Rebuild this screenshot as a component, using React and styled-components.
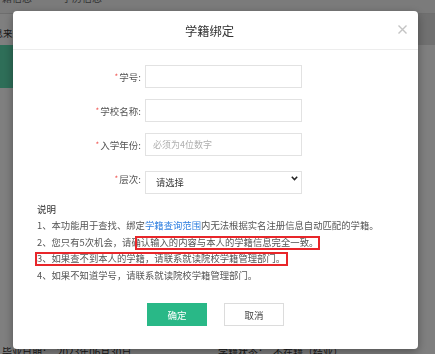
import React from "react";
import styled, { createGlobalStyle } from "styled-components";

const Global = createGlobalStyle`
  html, body { margin: 0; padding: 0; }
  body {
    width: 435px;
    height: 354px;
    overflow: hidden;
    background: #ffffff;
    font-family: "Noto Sans CJK SC", "Noto Sans", sans-serif;
  }
  * { box-sizing: border-box; }
`;

/* ---------- page behind the dialog ---------- */
const Page = styled.div`
  height: 359px;
  display: flex;
  flex-direction: column;
  background: #fff;
`;

const TopNav = styled.div`
  height: 14px;
  background: #f6f6f6;
  border-bottom: 1px solid #dcdcdc;
  display: flex;
  gap: 30px;
  padding-left: 0;
  overflow: hidden;
`;

const NavItem = styled.span`
  font-size: 10px;
  line-height: 10px;
  color: #666;
  margin-top: -7px;
  margin-left: ${(p) => p.$offset || 0}px;
`;

const SubBar = styled.div`
  height: 31px;
  background: #e0e0e0;
  display: flex;
  align-items: stretch;
  overflow: hidden;
`;

const SubTab = styled.div`
  background: #fff;
  width: 120px;
  display: flex;
  align-items: center;
  padding-top: 7px;
  font-size: 9.5px;
  color: #333;
  span { margin-left: -16px; }
`;

const Banner = styled.div`
  height: 43px;
  width: 220px;
  background: #5cdcb0;
`;

const InfoRow = styled.div`
  margin-top: auto;
  height: 14px;
  display: flex;
  font-size: 10px;
  line-height: 14px;
  color: #333;
  white-space: nowrap;
`;

const InfoItem = styled.span`
  width: ${(p) => p.$w}px;
  padding-left: ${(p) => p.$pl || 0}px;
`;

/* ---------- dialog ---------- */
const Overlay = styled.div`
  position: fixed;
  inset: 0;
  background: rgba(0, 0, 0, 0.5);
  display: flex;
  align-items: flex-start;
  padding: 11px 0 0 13px;
`;

const Modal = styled.div`
  width: 405px;
  height: 338px;
  background: #fff;
  border-radius: 4px;
  box-shadow: 0 3px 10px rgba(0, 0, 0, 0.35);
  display: flex;
  flex-direction: column;
`;

const Header = styled.div`
  height: 39px;
  border-bottom: 1px solid #ededed;
  display: flex;
  align-items: center;
  padding: 0 10px;
`;

const Title = styled.div`
  flex: 1;
  text-align: center;
  font-size: 12.3px;
  color: #333;
  padding-top: 1px;
`;

const CloseBtn = styled.button`
  width: 12px;
  height: 12px;
  padding: 0;
  border: 0;
  background: none;
  display: flex;
  align-items: center;
  justify-content: center;
  margin-top: -2px;
  cursor: pointer;
`;

const Body = styled.div`
  flex: 1;
  display: flex;
  flex-direction: column;
  padding: 15px 24px 0;
`;

const Form = styled.div`
  display: flex;
  flex-direction: column;
  gap: 11px;
`;

const Row = styled.div`
  display: flex;
  align-items: center;
  height: 23px;
`;

const Label = styled.label`
  width: 104px;
  margin-right: 4px;
  text-align: right;
  font-size: 9.5px;
  color: #555;
  white-space: nowrap;
`;

const Req = styled.span`
  color: #f0524f;
  font-size: 8px;
  margin-right: 1px;
  position: relative;
  top: -1px;
`;

const Input = styled.input`
  width: 157px;
  height: 23px;
  border: 1px solid #e2e2e2;
  border-radius: 0;
  padding: 0 7px;
  font-size: 9px;
  font-family: inherit;
  color: #333;
  outline: none;
  &::placeholder { color: #b0b0b0; }
`;

const SelectWrap = styled.div`
  position: relative;
  width: 157px;
  height: 23px;
`;

const Select = styled.select`
  appearance: none;
  width: 100%;
  height: 100%;
  border: 1px solid #e2e2e2;
  border-radius: 0;
  background: #fff;
  padding: 0 10px;
  font-size: 9.3px;
  font-family: inherit;
  color: #333;
  outline: none;
`;

const Chevron = styled.svg`
  position: absolute;
  right: 4px;
  top: 9px;
  pointer-events: none;
`;

const Notes = styled.div`
  position: relative;
  margin-top: 10.5px;
  font-size: 9.35px;
  line-height: 16.5px;
  color: #555;
  white-space: nowrap;
`;

const NotesTitle = styled.div`
  color: #333;
  font-size: 9.5px;
`;

const Link = styled.a`
  color: #2f7fe0;
  text-decoration: none;
`;

const Marker = styled.div`
  position: absolute;
  border: 2px solid #e8262a;
  pointer-events: none;
`;

const Actions = styled.div`
  margin-top: 20px;
  display: flex;
  justify-content: center;
  gap: 17px;
`;

const Button = styled.button`
  width: 60px;
  height: 23px;
  font-family: inherit;
  font-size: 9.5px;
  border-radius: 0;
  cursor: pointer;
  padding: 0;
  border: 1px solid ${(p) => (p.$primary ? "#29b887" : "#dcdcdc")};
  background: ${(p) => (p.$primary ? "#29b887" : "#fff")};
  color: ${(p) => (p.$primary ? "#fff" : "#444")};
`;

export default function App() {
  return (
    <>
      <Global />
      <Page>
        <TopNav>
          <NavItem $offset={-8}>学籍信息</NavItem>
          <NavItem>学历信息</NavItem>
        </TopNav>
        <SubBar>
          <SubTab>
            <span>信息来源</span>
          </SubTab>
        </SubBar>
        <Banner />
        <InfoRow>
          <InfoItem $w={218} $pl={2}>毕业日期：　2023年06月30日</InfoItem>
          <InfoItem $w={200}>学籍状态：　不在籍（结业）</InfoItem>
        </InfoRow>
      </Page>

      <Overlay>
        <Modal>
          <Header>
            <Title>学籍绑定</Title>
            <CloseBtn aria-label="关闭">
              <svg width="9" height="9" viewBox="0 0 9 9">
                <path d="M0.5 0.5 L8.5 8.5 M8.5 0.5 L0.5 8.5" stroke="#c4c4c4" strokeWidth="1.4" />
              </svg>
            </CloseBtn>
          </Header>
          <Body>
            <Form>
              <Row>
                <Label><Req>*</Req>学号:</Label>
                <Input />
              </Row>
              <Row>
                <Label><Req>*</Req>学校名称:</Label>
                <Input />
              </Row>
              <Row>
                <Label><Req>*</Req>入学年份:</Label>
                <Input placeholder="必须为4位数字" />
              </Row>
              <Row>
                <Label><Req>*</Req>层次:</Label>
                <SelectWrap>
                  <Select defaultValue="">
                    <option value="">请选择</option>
                  </Select>
                  <Chevron width="7" height="5" viewBox="0 0 7 5">
                    <path d="M0.8 0.8 L3.5 3.6 L6.2 0.8" fill="none" stroke="#222" strokeWidth="1.5" />
                  </Chevron>
                </SelectWrap>
              </Row>
            </Form>

            <Notes>
              <NotesTitle>说明</NotesTitle>
              <div>1、本功能用于查找、绑定<Link>学籍查询范围</Link>内无法根据实名注册信息自动匹配的学籍。</div>
              <div>2、您只有5次机会，请确认输入的内容与本人的学籍信息完全一致。</div>
              <div>3、如果查不到本人的学籍，请联系就读院校学籍管理部门。</div>
              <div>4、如果不知道学号，请联系就读院校学籍管理部门。</div>
              <Marker style={{ left: 98, top: 35, width: 185, height: 14 }} />
              <Marker style={{ left: -2, top: 51.5, width: 253, height: 14 }} />
            </Notes>

            <Actions>
              <Button $primary>确定</Button>
              <Button>取消</Button>
            </Actions>
          </Body>
        </Modal>
      </Overlay>
    </>
  );
}
